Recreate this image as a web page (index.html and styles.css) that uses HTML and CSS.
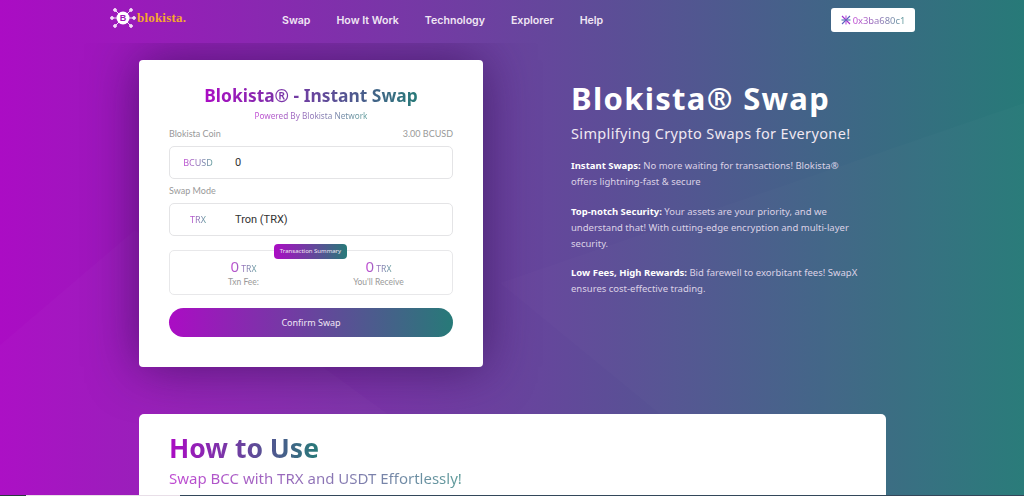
FILE: index.html
```html
<!DOCTYPE html>
<html lang="en">
  <head>
    <meta charset="UTF-8" />
    <meta name="viewport" content="width=device-width, initial-scale=1.0" />
    <title>Blokista Swap</title>
    <link rel="stylesheet" href="styles.css">
  </head>
  <body>
    <header class="topbar">
      <a class="logo" href="#">
        <svg class="logo-mark" width="26" height="22" viewBox="0 0 26 22">
          <g stroke="#f3dcf7" stroke-width="1" fill="#f3dcf7">
            <line x1="13" y1="11" x2="5" y2="3" /><circle cx="5" cy="3" r="1.4" />
            <line x1="13" y1="11" x2="21" y2="3" /><circle cx="21" cy="3" r="1.4" />
            <line x1="13" y1="11" x2="2" y2="11" /><circle cx="2" cy="11" r="1.4" />
            <line x1="13" y1="11" x2="24" y2="11" /><circle cx="24" cy="11" r="1.4" />
            <line x1="13" y1="11" x2="5" y2="19" /><circle cx="5" cy="19" r="1.4" />
            <line x1="13" y1="11" x2="21" y2="19" /><circle cx="21" cy="19" r="1.4" />
          </g>
          <circle cx="13" cy="11" r="6.5" fill="#fff" />
          <text x="13" y="14" text-anchor="middle" class="logo-b">B</text>
        </svg>
        <span class="logo-text">blokista.</span>
      </a>
      <nav class="nav">
        <a href="#">Swap</a>
        <a href="#">How It Work</a>
        <a href="#">Technology</a>
        <a href="#">Explorer</a>
        <a href="#">Help</a>
      </nav>
      <button class="wallet">
        <svg width="10" height="10" viewBox="0 0 10 10">
          <g stroke-width="1.1">
            <line x1="1" y1="1" x2="9" y2="9" stroke="#a02fd0" />
            <line x1="9" y1="1" x2="1" y2="9" stroke="#5a5fc0" />
            <line x1="5" y1="0.5" x2="5" y2="9.5" stroke="#b54fd8" />
            <line x1="0.5" y1="5" x2="9.5" y2="5" stroke="#4c6fb0" />
          </g>
        </svg>
        <span class="grad-text soft">0x3ba680c1</span>
      </button>
    </header>

    <main class="hero">
      <section class="swap-card">
        <h2 class="swap-title"><span class="grad-text">Blokista® - Instant Swap</span></h2>
        <p class="swap-sub"><span class="grad-text soft">Powered By Blokista Network</span></p>
        <div class="label-row"><span>Blokista Coin</span><span>3.00 BCUSD</span></div>
        <div class="field">
          <span class="field-tag"><span class="grad-text soft">BCUSD</span></span>
          <span class="field-value">0</span>
        </div>
        <div class="label-row"><span>Swap Mode</span></div>
        <div class="field">
          <span class="field-tag"><span class="grad-text soft">TRX</span></span>
          <span class="field-value">Tron (TRX)</span>
        </div>
        <div class="summary">
          <span class="summary-badge">Transaction Summary</span>
          <div class="summary-col">
            <div class="grad-text soft summary-num"><b>0</b> TRX</div>
            <div class="summary-label">Txn Fee:</div>
          </div>
          <div class="summary-col">
            <div class="grad-text soft summary-num"><b>0</b> TRX</div>
            <div class="summary-label">You'll Receive</div>
          </div>
        </div>
        <button class="confirm">Confirm Swap</button>
      </section>

      <section class="intro">
        <h1>Blokista® Swap</h1>
        <h3>Simplifying Crypto Swaps for Everyone!</h3>
        <p><strong>Instant Swaps:</strong> No more waiting for transactions! Blokista® offers lightning-fast &amp; secure</p>
        <p><strong>Top-notch Security:</strong> Your assets are your priority, and we understand that! With cutting-edge encryption and multi-layer security.</p>
        <p><strong>Low Fees, High Rewards:</strong> Bid farewell to exorbitant fees! SwapX ensures cost-effective trading.</p>
      </section>
    </main>

    <section class="how">
      <h2 class="grad-text">How to Use</h2>
      <h4 class="grad-text soft">Swap BCC with TRX and USDT Effortlessly!</h4>
    </section>
    <div class="page-edge"></div>
  </body>
</html>
```
FILE: styles.css
```css
* {
  box-sizing: border-box;
}

html, body {
  height: 496px;
  overflow: hidden;
}

body {
  margin: 0;
  font-family: "Noto Sans", sans-serif;
  background: linear-gradient(90deg, #ab0cc4 0%, #277a78 100%);
  color: white;
  position: relative;
}

/* faint diagonal shapes behind the hero */
body::before {
  content: "";
  position: absolute;
  inset: 43px 0 0 0;
  background: rgba(255, 255, 255, 0.02);
  clip-path: polygon(0 302px, 135px 187px, 500px 453px, 0 453px);
}

body::after {
  content: "";
  position: absolute;
  inset: 43px 0 0 0;
  background: rgba(255, 255, 255, 0.015);
  clip-path: polygon(500px 240px, 1024px 60px, 1024px 453px, 760px 453px);
}

a {
  color: inherit;
  text-decoration: none;
}

.grad-text {
  background: linear-gradient(90deg, #ab0cc4, #277a78);
  -webkit-background-clip: text;
  background-clip: text;
  color: transparent;
}

.soft {
  opacity: 0.75;
}

.topbar {
  position: relative;
  z-index: 2;
  height: 43px;
  padding: 8px 109px 0 110px;
  display: flex;
  align-items: flex-start;
  background: linear-gradient(90deg, #ab0cc4 0%, #277a78 100%);
}

.logo {
  display: flex;
  align-items: center;
  height: 20px;
  width: 172px;
  gap: 1px;
}

.logo-b {
  font: bold 9px "Liberation Sans", sans-serif;
  fill: #a014b8;
}

.logo-text {
  font: bold 13px "Liberation Serif", serif;
  color: #f5a82e;
  letter-spacing: 0.2px;
}

.nav {
  display: flex;
  gap: 26px;
  flex: 1;
  font: 600 10.6px/26px "Inter", sans-serif;
  color: #f0e6f4;
}

.wallet {
  width: 84px;
  height: 24px;
  border: none;
  border-radius: 3px;
  background: white;
  display: flex;
  align-items: center;
  justify-content: center;
  gap: 2px;
  padding: 0;
  font: 9.4px "Noto Sans", sans-serif;
}

.hero {
  position: relative;
  z-index: 1;
  display: flex;
  padding: 17px 0 0 139px;
  height: 371px;
}

.swap-card {
  width: 344px;
  height: 307px;
  background: white;
  border-radius: 4px;
  padding: 22px 30px 0;
  color: #999;
  box-shadow: 0 0 50px rgba(40, 10, 70, 0.6);
}

.swap-title {
  margin: 0;
  text-align: center;
  font-size: 17.4px;
  line-height: 26px;
  font-weight: 700;
}

.swap-sub {
  margin: 1px 0 0;
  text-align: center;
  font-size: 8.2px;
  line-height: 14px;
}

.label-row {
  display: flex;
  justify-content: space-between;
  font: 9px/16px "Lato", sans-serif;
  margin-top: 3px;
  height: 20px;
}

.field + .label-row {
  margin-top: 4px;
}

.field {
  height: 33px;
  border: 1px solid #e4e4e6;
  border-radius: 5px;
  display: flex;
  align-items: center;
}

.field-tag {
  width: 56px;
  margin-right: 9px;
  text-align: center;
  font-size: 9px;
}

.field-value {
  color: #333;
  font: 11px "Roboto", sans-serif;
}

.summary {
  position: relative;
  height: 45px;
  margin-top: 14px;
  border: 1px solid #e8e8ea;
  border-radius: 5px;
  display: flex;
  padding: 4px 6px 0;
}

.summary-badge {
  position: absolute;
  top: -7px;
  left: 104px;
  width: 73px;
  height: 15px;
  border-radius: 4px;
  background: linear-gradient(90deg, #ab0cc4, #277a78);
  color: #f0e6f4;
  font-size: 6px;
  line-height: 15px;
  text-align: center;
}

.summary-col {
  flex: 1;
  text-align: center;
}

.summary-num {
  display: inline-block;
  font-size: 8.6px;
  line-height: 15px;
}

.summary-num b {
  font-size: 15px;
  font-weight: 400;
}

.summary-label {
  font: 8.5px/11px "Lato", sans-serif;
}

.confirm {
  display: block;
  width: 100%;
  height: 29px;
  margin-top: 13px;
  border: none;
  border-radius: 15px;
  background: linear-gradient(90deg, #ab0cc4, #277a78);
  color: #f0e6f4;
  font: 9px "Noto Sans", sans-serif;
}

.intro {
  margin-left: 88px;
  width: 290px;
  padding-top: 18px;
}

.intro h1 {
  margin: 0;
  font-size: 31px;
  line-height: 40px;
  font-weight: 700;
  letter-spacing: 1.3px;
  white-space: nowrap;
}

.intro h3 {
  margin: 5px 0 15px;
  font-size: 14.5px;
  line-height: 20px;
  font-weight: 400;
  letter-spacing: 0.35px;
  white-space: nowrap;
  color: #f0e8f2;
}

.intro p {
  margin: 0 0 13.5px;
  font-size: 9.5px;
  line-height: 16px;
  color: #dcd2e6;
}

.intro strong {
  color: white;
}

.how {
  position: relative;
  z-index: 1;
  margin-left: 139px;
  width: 747px;
  height: 81px;
  background: white;
  border-radius: 5px 5px 0 0;
  padding: 16px 30px 0;
}

.how h2 {
  display: table;
  margin: 0;
  font-size: 26.5px;
  line-height: 36px;
  font-weight: 700;
}

.how h4 {
  display: table;
  margin: 1px 0 0;
  font-size: 15px;
  line-height: 22px;
  font-weight: 400;
}

.page-edge {
  position: relative;
  z-index: 1;
  height: 1px;
  background: linear-gradient(90deg, #2a3a40 26px, #e8dfe8 26px, #e8dfe8 180px, #33475a 180px);
}
```
